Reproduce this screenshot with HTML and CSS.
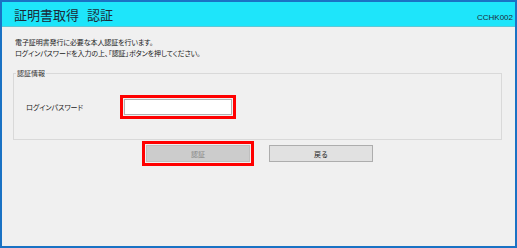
FILE: index.html
```html
<!DOCTYPE html>
<html lang="ja">
<head>
    <meta charset="UTF-8">
    <title>証明書取得 認証</title>
    <link rel="stylesheet" href="styles.css">
</head>
<body>
    <div class="window">
        <header class="title-bar">
            <h1 class="title">証明書取得<span class="title-gap"></span>認証</h1>
            <span class="screen-id">CCHK002</span>
        </header>
        <main class="content">
            <div class="desc">
                <p>電子証明書発行に必要な本人認証を行います。</p>
                <p>ログインパスワードを入力の上、「認証」ボタンを押してください。</p>
            </div>
            <fieldset class="group">
                <legend>認証情報</legend>
                <div class="form-row">
                    <label class="form-label" for="pw">ログインパスワード</label>
                    <span class="mark">
                        <input class="form-input" type="password" id="pw">
                    </span>
                </div>
            </fieldset>
            <div class="actions">
                <span class="mark">
                    <button class="btn btn-disabled" type="button">認証</button>
                </span>
                <button class="btn" type="button">戻る</button>
            </div>
        </main>
    </div>
</body>
</html>
```

FILE: styles.css
```css
*,*::before,*::after{
    padding: 0;
    margin: 0;
    box-sizing: border-box;
}
body{
    font-family: "Noto Sans CJK JP", "Noto Sans", sans-serif;
    font-feature-settings: "palt";
    color: #222;
    background: #fff;
}
.window{
    width: 517px;
    height: 248px;
    border: 2px solid #1a72c4;
    background: #f0f0f0;
    display: flex;
    flex-direction: column;
}
.title-bar{
    height: 25px;
    background: #1ee5fa;
    border-bottom: 1px solid #5cc9d8;
    display: flex;
    justify-content: space-between;
    align-items: flex-end;
    padding: 0 2px 4px 12px;
}
.title{
    font-size: 13px;
    font-weight: 400;
    line-height: 14px;
    color: #1c2b38;
    display: flex;
}
.title-gap{
    width: 8px;
}
.screen-id{
    font-family: "Liberation Sans", Arial, sans-serif;
    font-size: 8px;
    line-height: 9px;
    color: #1c2b38;
}
.content{
    flex: 1;
    padding: 10px 13px 0 11px;
}
.desc{
    font-size: 7px;
    line-height: 11px;
    padding-left: 2px;
    letter-spacing: -0.1px;
}
.group{
    margin-top: 9px;
    border: 1px solid #d9d9d9;
    padding: 17px 12px 20px 2px;
}
.group legend{
    font-size: 7px;
    line-height: 10px;
    color: #333;
    padding: 0 1px;
}
.form-row{
    display: flex;
    align-items: center;
    padding-left: 10px;
}
.form-label{
    width: 94px;
    font-size: 7px;
    color: #222;
}
.mark{
    display: inline-flex;
    border: 3px solid #ff0000;
    padding: 1px;
}
.form-input{
    width: 108px;
    height: 16px;
    border: 1px solid #b0b0b0;
    background: #fff;
    outline: none;
}
.actions{
    display: flex;
    align-items: center;
    gap: 15px;
    padding: 1px 0 0 129px;
}
.btn{
    width: 104px;
    height: 17px;
    font-family: inherit;
    font-size: 7px;
    background: #e1e1e1;
    border: 1px solid #adadad;
    color: #222;
}
.btn-disabled{
    background: #cccccc;
    border-color: #bfbfbf;
    color: #888;
}
```
